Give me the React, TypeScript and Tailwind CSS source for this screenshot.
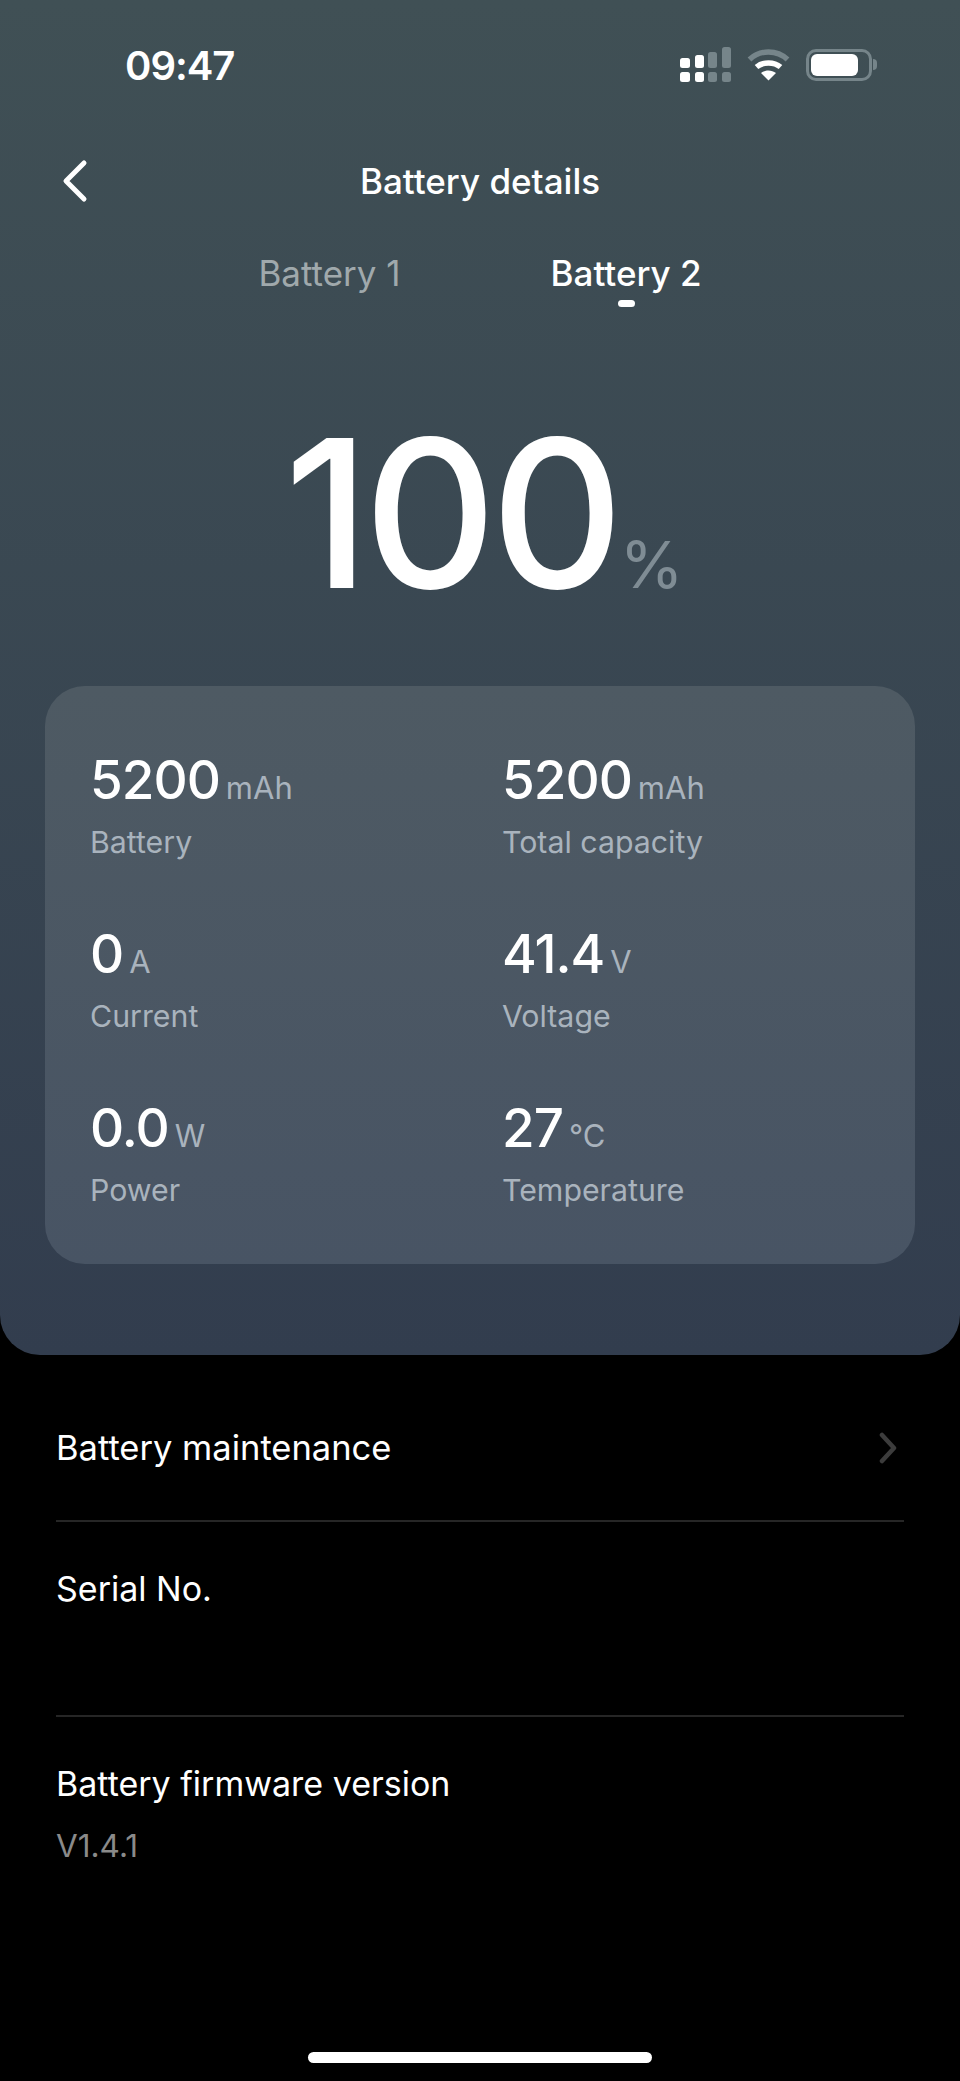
const FONT = "font-['Inter','Noto_Sans',sans-serif]";

const STATS = [
  { value: "5200", unit: "mAh", label: "Battery" },
  { value: "5200", unit: "mAh", label: "Total capacity" },
  { value: "0", unit: "A", label: "Current" },
  { value: "41.4", unit: "V", label: "Voltage" },
  { value: "0.0", unit: "W", label: "Power" },
  { value: "27", unit: "°C", label: "Temperature" },
];

function SignalIcon() {
  return (
    <svg width="51" height="35" viewBox="0 0 51 35" className="block">
      <rect x="0" y="11" width="10" height="10" rx="2.5" fill="#fff" />
      <rect x="15" y="8" width="9" height="13" rx="2.5" fill="#fff" />
      <rect x="28" y="5" width="9" height="16" rx="2.5" fill="#76858a" />
      <rect x="42" y="0" width="9" height="21" rx="2.5" fill="#76858a" />
      <rect x="0" y="25" width="10" height="10" rx="2.5" fill="#fff" />
      <rect x="15" y="25" width="9" height="10" rx="2.5" fill="#fff" />
      <rect x="28" y="25" width="9" height="10" rx="2.5" fill="#76858a" />
      <rect x="42" y="25" width="9" height="10" rx="2.5" fill="#76858a" />
    </svg>
  );
}

function WifiIcon() {
  return (
    <svg width="43" height="32" viewBox="0 0 43 32" className="block">
      <path d="M2.500 10.500C13 0.500 30 0.500 40.500 10.500" fill="none" stroke="#76858a" strokeWidth="5.500" />
      <path d="M9.500 18C16 12.500 27 12.500 33.500 18" fill="none" stroke="#fff" strokeWidth="5.500" />
      <path d="M14 24C18.500 20.500 24.500 20.500 29 24L21.500 31.500Z" fill="#fff" />
    </svg>
  );
}

function BatteryIcon() {
  return (
    <div className="flex items-center">
      <div className="flex h-[32px] w-[66px] items-center rounded-[10px] border-[3px] border-[#76858a] p-[2px] pr-[11px]">
        <div className="h-full w-full rounded-[6px] bg-white" />
      </div>
      <div className="ml-[1px] h-[11px] w-[4px] rounded-r-full bg-[#76858a]" />
    </div>
  );
}

function StatusBar() {
  return (
    <div className="flex h-[139px] items-start justify-between pl-[125px] pr-[83px] pt-[44px] text-white">
      <span className="text-[40px] leading-[44px] font-semibold tracking-[-1px]">09:47</span>
      <div className="mt-[3px] flex items-center gap-[16px]">
        <SignalIcon />
        <WifiIcon />
        <BatteryIcon />
      </div>
    </div>
  );
}

function NavBar() {
  return (
    <div className="relative flex h-[84px] items-center justify-center text-white">
      <svg
        width="30"
        height="44"
        viewBox="0 0 30 44"
        className="absolute left-[60px] top-[20px]"
        fill="none"
        stroke="#fff"
        strokeWidth="5"
        strokeLinecap="round"
        strokeLinejoin="round"
      >
        <path d="M24 4L6 22L24 40" />
      </svg>
      <span className="text-[35px] leading-[44px] font-medium">Battery details</span>
    </div>
  );
}

function Tabs() {
  return (
    <div className="flex justify-center gap-[150px] pt-[28px]">
      <span className="text-[35px] leading-[44px] text-[#a0a9ac]">Battery 1</span>
      <div className="flex flex-col items-center">
        <span className="text-[35px] leading-[44px] font-medium text-white">Battery 2</span>
        <span className="mt-[5px] h-[7px] w-[17px] rounded-full bg-white" />
      </div>
    </div>
  );
}

function Stat({ value, unit, label }: { value: string; unit: string; label: string }) {
  return (
    <div className="h-[174px]">
      <div className="flex items-baseline gap-[6px] text-white">
        <span className="text-[53px] leading-[60px] font-[450] tracking-[-1px]">{value}</span>
        <span className="text-[31px] leading-[60px] text-[#a9b3bd]">{unit}</span>
      </div>
      <div className="mt-[4px] text-[30.300px] leading-[40px] text-[#a9b3bd]">{label}</div>
    </div>
  );
}

function Hero() {
  return (
    <div className="h-[1355px] rounded-b-[40px] bg-gradient-to-b from-[#405055] to-[#323d4e] px-[45px]">
      <div className="-mx-[45px]">
        <StatusBar />
        <NavBar />
        <Tabs />
      </div>
      <div className="mt-[91px] flex items-baseline justify-center pl-[8px] text-white">
        <span className="text-[206px] leading-[230px] font-[450] tracking-[-6px]">100</span>
        <span className="ml-[2px] text-[65px] leading-[70px] text-[#7f8c94]">%</span>
      </div>
      <div className="mt-[58px] h-[578px] rounded-[40px] bg-gradient-to-b from-[#4e5a63] to-[#485464] pl-[45px] pt-[64px]">
        <div className="grid grid-cols-[412px_1fr]">
          {STATS.map((s) => (
            <Stat key={s.label} {...s} />
          ))}
        </div>
      </div>
    </div>
  );
}

function DetailList() {
  return (
    <div className="flex-1 px-[56px] text-white">
      <div className="flex h-[167px] items-start justify-between border-b-2 border-[#262626] pt-[71px]">
        <span className="text-[34.500px] leading-[44px]">Battery maintenance</span>
        <svg width="20" height="32" viewBox="0 0 20 32" fill="none" stroke="#3c3c3c" strokeWidth="4.500" strokeLinecap="round" strokeLinejoin="round" className="mr-[6px] mt-[6px]">
          <path d="M4 3L16 16L4 29" />
        </svg>
      </div>
      <div className="h-[195px] border-b-2 border-[#262626] pt-[45px]">
        <span className="text-[34px] leading-[44px]">Serial No.</span>
      </div>
      <div className="pt-[45px]">
        <div className="text-[34px] leading-[44px]">Battery firmware version</div>
        <div className="mt-[18px] text-[31.500px] leading-[44px] text-[#8a8a8a]">V1.4.1</div>
      </div>
    </div>
  );
}

export default function App() {
  return (
    <div className={`flex h-[2081px] w-[960px] flex-col overflow-hidden bg-black ${FONT}`}>
      <Hero />
      <DetailList />
      <div className="flex justify-center pb-[18px]">
        <div className="h-[11px] w-[344px] rounded-full bg-white" />
      </div>
    </div>
  );
}
